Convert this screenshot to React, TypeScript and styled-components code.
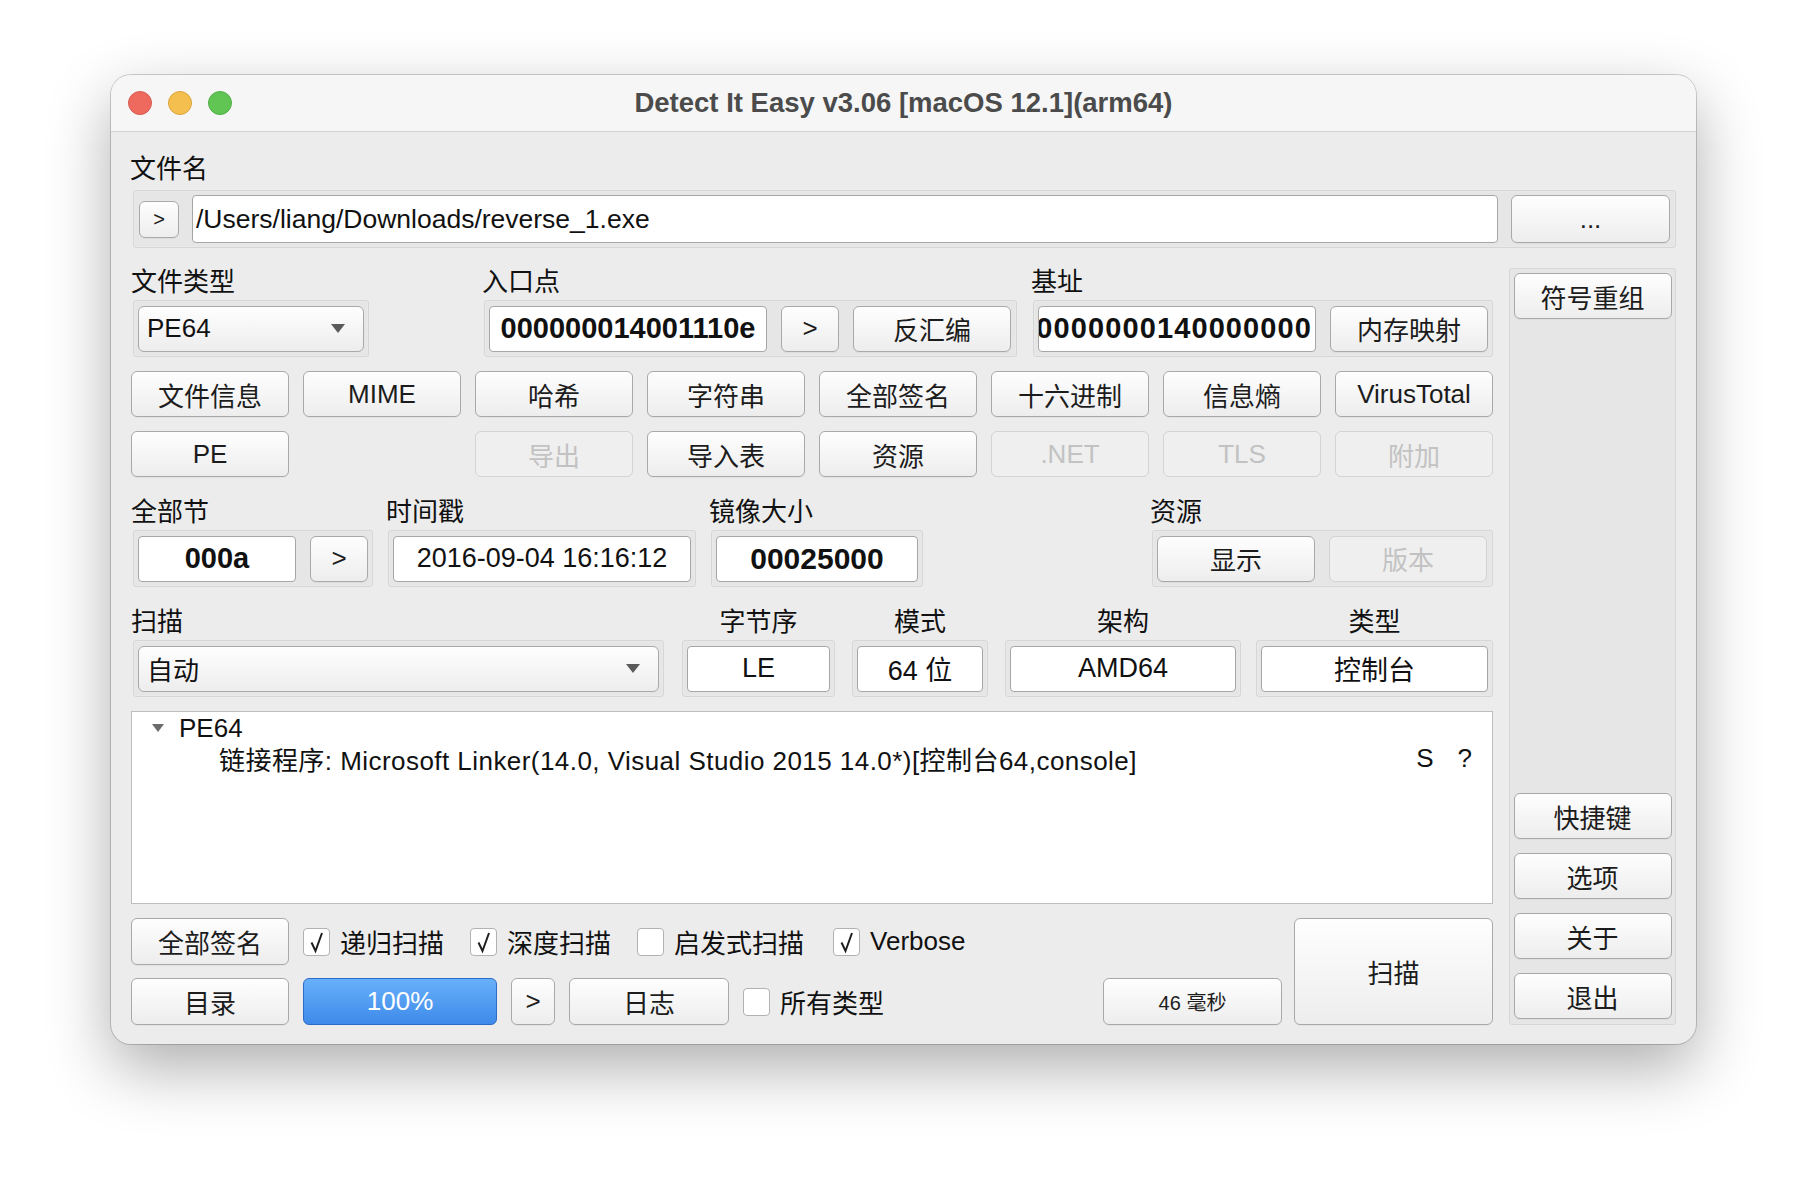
import React from 'react'
import styled, { createGlobalStyle, css } from 'styled-components'

const FONT = `"Liberation Sans", "Noto Sans CJK SC", sans-serif`

const GlobalStyle = createGlobalStyle`
    html, body {
        margin: 0;
        padding: 0;
        background: #ffffff;
        font-family: ${FONT};
    }
    * {
        box-sizing: border-box;
    }
`

const Stage = styled.div`
    width: 1808px;
    height: 1192px;
    padding: 75px 0 0 111px;
`

const Window = styled.div`
    width: 1585px;
    height: 969px;
    border-radius: 20px;
    background: #ececec;
    overflow: hidden;
    box-shadow: 0 0 0 1px rgba(0, 0, 0, 0.18), 0 24px 64px rgba(0, 0, 0, 0.32);
    display: flex;
    flex-direction: column;
`

const TitleBar = styled.div`
    height: 57px;
    flex: none;
    background: #f6f6f6;
    border-bottom: 1px solid #d3d3d3;
    display: grid;
    grid-template-columns: 1fr auto 1fr;
    align-items: center;
`

const Lights = styled.div`
    display: flex;
    gap: 16px;
    padding-left: 17px;
`

const Light = styled.span<{ $c: string; $b: string }>`
    width: 24px;
    height: 24px;
    border-radius: 50%;
    background: ${(p) => p.$c};
    border: 1px solid ${(p) => p.$b};
`

const Title = styled.div`
    font-size: 27.5px;
    font-weight: bold;
    color: #4b4b4b;
    white-space: nowrap;
`

const Content = styled.div`
    padding: 0 20px;
    flex: 1;
    display: flex;
    flex-direction: column;
`

const Label = styled.div<{ $center?: boolean }>`
    height: 30px;
    line-height: 30px;
    font-size: 26px;
    color: #111;
    white-space: nowrap;
    margin-bottom: 3px;
    text-align: ${(p) => (p.$center ? 'center' : 'left')};
    margin-left: ${(p) => (p.$center ? '0' : '-2px')};
`

const FileLabel = styled(Label)`
    margin-top: 22px;
    margin-bottom: 6px;
    margin-left: -1px;
`

const Frame = styled.div<{ $h?: number }>`
    height: ${(p) => p.$h ?? 57}px;
    display: flex;
    align-items: center;
    gap: 14px;
    padding: 0 4px;
    border: 1px solid #d6d6d6;
    background: #e6e6e6;
    border-radius: 3px;
    box-shadow: inset 0 0 0 1px #e9e9e9;
`

const FileFrame = styled(Frame)`
    margin-left: 2px;
    padding: 0 5px;
    gap: 13px;
`

const buttonBase = css`
    display: flex;
    align-items: center;
    justify-content: center;
    height: 46px;
    border-radius: 6px;
    font-family: ${FONT};
    font-size: 26px;
    white-space: nowrap;
    flex: none;
`

const Button = styled.div<{ $w?: number; $h?: number; $off?: boolean; $small?: boolean }>`
    ${buttonBase};
    width: ${(p) => (p.$w ? `${p.$w}px` : 'auto')};
    height: ${(p) => p.$h ?? 46}px;
    font-size: ${(p) => (p.$small ? 20 : 26)}px;
    color: ${(p) => (p.$off ? '#c2c2c2' : '#1c1c1c')};
    border: 1px solid ${(p) => (p.$off ? '#d3d3d3' : '#a9a9a9')};
    background: ${(p) =>
        p.$off ? '#efefef' : 'linear-gradient(#fefefe, #ededed)'};
    box-shadow: ${(p) => (p.$off ? 'none' : '0 1px 0 rgba(0,0,0,0.04)')};
`

const Progress = styled.div`
    ${buttonBase};
    width: 194px;
    height: 47px;
    color: #fff;
    border: 1px solid #2d6bc4;
    background: linear-gradient(#68b0fb, #3e8ae9);
`

const TextBox = styled.div<{ $bold?: boolean; $left?: boolean; $w?: number; $size?: number }>`
    height: 46px;
    display: flex;
    align-items: center;
    justify-content: ${(p) => (p.$left ? 'flex-start' : 'center')};
    width: ${(p) => (p.$w ? `${p.$w}px` : 'auto')};
    flex: ${(p) => (p.$w ? 'none' : '1')};
    overflow: hidden;
    padding: 0 6px;
    background: #fff;
    border: 1px solid #a6a6a6;
    border-radius: 4px;
    font-size: ${(p) => p.$size ?? 27}px;
    font-weight: ${(p) => (p.$bold ? 'bold' : 'normal')};
    color: #111;
    white-space: nowrap;
`

const PathBox = styled(TextBox)`
    height: 48px;
    padding: 0 3px;
    font-size: 26.5px;
`

const ClippedBox = styled(TextBox)`
    justify-content: flex-end;
    padding: 0 3px 0 0;
    letter-spacing: 1.1px;
`

const Combo = styled.div<{ $w?: number }>`
    ${buttonBase};
    justify-content: space-between;
    flex: 1;
    padding: 0 18px 0 8px;
    color: #111;
    border: 1px solid #a9a9a9;
    background: linear-gradient(#fefefe, #ededed);
`

const Arrow = styled.span`
    width: 0;
    height: 0;
    border-left: 7px solid transparent;
    border-right: 7px solid transparent;
    border-top: 9px solid #5a5a5a;
`

const Body = styled.div`
    display: flex;
    gap: 16px;
    margin-top: 19px;
`

const Main = styled.div`
    width: 1362px;
    display: flex;
    flex-direction: column;
`

const FieldRow = styled.div<{ $mt?: number }>`
    display: flex;
    margin-top: ${(p) => p.$mt ?? 0}px;
`

const Field = styled.div<{ $w: number; $ml: number }>`
    width: ${(p) => p.$w}px;
    margin-left: ${(p) => p.$ml}px;
    display: flex;
    flex-direction: column;
`

const ButtonGrid = styled.div`
    display: grid;
    grid-template-columns: repeat(8, 1fr);
    gap: 14px;
    margin-top: 14px;
`

const Tree = styled.div`
    margin-top: 14px;
    height: 193px;
    background: #fff;
    border: 1px solid #bdbdbd;
    padding: 1px 20px 0 20px;
    font-size: 26px;
    color: #111;
`

const TreeLine = styled.div<{ $indent?: number }>`
    height: 30px;
    display: flex;
    align-items: center;
    padding-left: ${(p) => p.$indent ?? 0}px;
    white-space: nowrap;
`

const LinkText = styled.span`
    letter-spacing: 0.45px;
`

const TreeArrow = styled.span`
    width: 0;
    height: 0;
    border-left: 6px solid transparent;
    border-right: 6px solid transparent;
    border-top: 8px solid #6b6b6b;
    margin-right: 15px;
`

const Flags = styled.span`
    margin-left: auto;
    display: flex;
    gap: 24px;
`

const Bottom = styled.div`
    margin-top: 14px;
    display: flex;
    gap: 12px;
`

const BottomLeft = styled.div`
    flex: 1;
    display: flex;
    flex-direction: column;
    gap: 13px;
`

const BottomRow = styled.div`
    height: 47px;
    display: flex;
    align-items: center;
    gap: 14px;
`

const Check = styled.label<{ $mr?: number }>`
    display: flex;
    align-items: center;
    gap: 10px;
    font-size: 26px;
    color: #111;
    white-space: nowrap;
    margin-right: ${(p) => p.$mr ?? 0}px;
`

const Box = styled.span`
    width: 27px;
    height: 28px;
    background: #fff;
    border: 1px solid #b2b2b2;
    border-radius: 4px;
    display: flex;
    align-items: center;
    justify-content: center;
`

const Spacer = styled.div`
    flex: 1;
`

const Side = styled.div`
    width: 167px;
    height: 757px;
    margin-top: 1px;
    border: 1px solid #d6d6d6;
    background: #e6e6e6;
    border-radius: 3px;
    padding: 4px 0 5px;
    display: flex;
    flex-direction: column;
    align-items: center;
    gap: 14px;
`

function CheckBox({ checked, label, mr }: { checked: boolean; label: string; mr?: number }) {
    return (
        <Check $mr={mr}>
            <Box>
                {checked && (
                    <svg width="20" height="24" viewBox="0 0 20 24">
                        <path d="M4.5 12.5 L8.5 21 L15 3" fill="none" stroke="#1e1e1e" strokeWidth="2" />
                    </svg>
                )}
            </Box>
            {label}
        </Check>
    )
}

export default function App() {
    return (
        <Stage>
            <GlobalStyle />
            <Window>
                <TitleBar>
                    <Lights>
                        <Light $c="#ee6a5f" $b="#d65a4f" />
                        <Light $c="#f5bf4f" $b="#d9a53c" />
                        <Light $c="#61c554" $b="#4fae44" />
                    </Lights>
                    <Title>Detect It Easy v3.06 [macOS 12.1](arm64)</Title>
                    <div />
                </TitleBar>

                <Content>
                    <FileLabel>文件名</FileLabel>
                    <FileFrame $h={58}>
                        <Button $w={40} $h={37} $small>&gt;</Button>
                        <PathBox $left>/Users/liang/Downloads/reverse_1.exe</PathBox>
                        <Button $w={159} $h={48}>...</Button>
                    </FileFrame>

                    <Body>
                        <Main>
                            <FieldRow>
                                <Field $w={236} $ml={2}>
                                    <Label>文件类型</Label>
                                    <Frame>
                                        <Combo>
                                            PE64
                                            <Arrow />
                                        </Combo>
                                    </Frame>
                                </Field>
                                <Field $w={533} $ml={115}>
                                    <Label>入口点</Label>
                                    <Frame>
                                        <TextBox $bold $w={278} $size={29}>000000014001110e</TextBox>
                                        <Button $w={58}>&gt;</Button>
                                        <Button $w={158}>反汇编</Button>
                                    </Frame>
                                </Field>
                                <Field $w={460} $ml={16}>
                                    <Label>基址</Label>
                                    <Frame>
                                        <ClippedBox $bold $w={278} $size={29}>0000000140000000</ClippedBox>
                                        <Button $w={158}>内存映射</Button>
                                    </Frame>
                                </Field>
                            </FieldRow>

                            <ButtonGrid>
                                <Button>文件信息</Button>
                                <Button>MIME</Button>
                                <Button>哈希</Button>
                                <Button>字符串</Button>
                                <Button>全部签名</Button>
                                <Button>十六进制</Button>
                                <Button>信息熵</Button>
                                <Button>VirusTotal</Button>
                                <Button>PE</Button>
                                <div />
                                <Button $off>导出</Button>
                                <Button>导入表</Button>
                                <Button>资源</Button>
                                <Button $off>.NET</Button>
                                <Button $off>TLS</Button>
                                <Button $off>附加</Button>
                            </ButtonGrid>

                            <FieldRow $mt={20}>
                                <Field $w={240} $ml={2}>
                                    <Label>全部节</Label>
                                    <Frame>
                                        <TextBox $bold $w={158} $size={29}>000a</TextBox>
                                        <Button $w={58}>&gt;</Button>
                                    </Frame>
                                </Field>
                                <Field $w={308} $ml={15}>
                                    <Label>时间戳</Label>
                                    <Frame>
                                        <TextBox>2016-09-04 16:16:12</TextBox>
                                    </Frame>
                                </Field>
                                <Field $w={212} $ml={15}>
                                    <Label>镜像大小</Label>
                                    <Frame>
                                        <TextBox $bold $size={30}>00025000</TextBox>
                                    </Frame>
                                </Field>
                                <Field $w={341} $ml={229}>
                                    <Label>资源</Label>
                                    <Frame>
                                        <Button $w={158}>显示</Button>
                                        <Button $w={158} $off>版本</Button>
                                    </Frame>
                                </Field>
                            </FieldRow>

                            <FieldRow $mt={20}>
                                <Field $w={531} $ml={2}>
                                    <Label>扫描</Label>
                                    <Frame>
                                        <Combo>
                                            自动
                                            <Arrow />
                                        </Combo>
                                    </Frame>
                                </Field>
                                <Field $w={153} $ml={18}>
                                    <Label $center>字节序</Label>
                                    <Frame>
                                        <TextBox>LE</TextBox>
                                    </Frame>
                                </Field>
                                <Field $w={136} $ml={17}>
                                    <Label $center>模式</Label>
                                    <Frame>
                                        <TextBox>64 位</TextBox>
                                    </Frame>
                                </Field>
                                <Field $w={236} $ml={17}>
                                    <Label $center>架构</Label>
                                    <Frame>
                                        <TextBox>AMD64</TextBox>
                                    </Frame>
                                </Field>
                                <Field $w={237} $ml={15}>
                                    <Label $center>类型</Label>
                                    <Frame>
                                        <TextBox>控制台</TextBox>
                                    </Frame>
                                </Field>
                            </FieldRow>

                            <Tree>
                                <TreeLine>
                                    <TreeArrow />
                                    PE64
                                </TreeLine>
                                <TreeLine $indent={67}>
                                    <LinkText>
                                        链接程序: Microsoft Linker(14.0, Visual Studio 2015 14.0*)[控制台64,console]
                                    </LinkText>
                                    <Flags>
                                        <span>S</span>
                                        <span>?</span>
                                    </Flags>
                                </TreeLine>
                            </Tree>

                            <Bottom>
                                <BottomLeft>
                                    <BottomRow>
                                        <Button $w={158} $h={47}>全部签名</Button>
                                        <CheckBox checked label="递归扫描" mr={12} />
                                        <CheckBox checked label="深度扫描" mr={12} />
                                        <CheckBox checked={false} label="启发式扫描" mr={15} />
                                        <CheckBox checked label="Verbose" />
                                    </BottomRow>
                                    <BottomRow>
                                        <Button $w={158} $h={47}>目录</Button>
                                        <Progress>100%</Progress>
                                        <Button $w={44} $h={47}>&gt;</Button>
                                        <Button $w={160} $h={47}>日志</Button>
                                        <CheckBox checked={false} label="所有类型" />
                                        <Spacer />
                                        <Button $w={179} $h={47} $small>46 毫秒</Button>
                                    </BottomRow>
                                </BottomLeft>
                                <Button $w={199} $h={107}>扫描</Button>
                            </Bottom>
                        </Main>

                        <Side>
                            <Button $w={158}>符号重组</Button>
                            <Spacer />
                            <Button $w={158}>快捷键</Button>
                            <Button $w={158}>选项</Button>
                            <Button $w={158}>关于</Button>
                            <Button $w={158}>退出</Button>
                        </Side>
                    </Body>
                </Content>
            </Window>
        </Stage>
    )
}
